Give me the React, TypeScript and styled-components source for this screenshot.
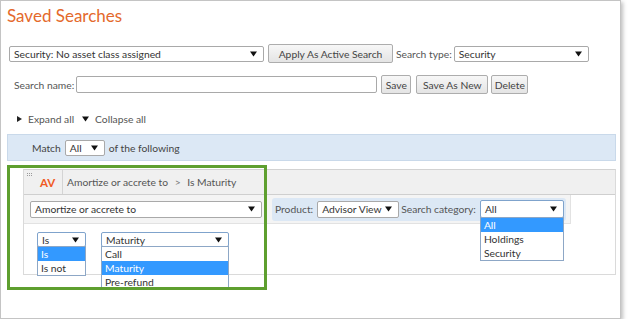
import styled, { createGlobalStyle } from 'styled-components';

const GlobalStyle = createGlobalStyle`
  html, body {
    margin: 0;
    padding: 0;
    background: #fff;
  }
  body {
    font-family: Lato, 'Open Sans', sans-serif;
    font-size: 10.3px;
    color: #444;
  }
`;

const Arrow = () => (
  <svg width='7' height='6' viewBox='0 0 7 6'>
    <path d='M0 0.5 L7 0.5 L3.5 5.5 Z' fill='#111' />
  </svg>
);

const Grip = () => (
  <svg width='6' height='5' viewBox='0 0 6 5'>
    {[0, 2, 4].map((x) =>
      [0, 2].map((y) => <rect key={`${x}-${y}`} x={x} y={y} width='1' height='1' fill='#999' />)
    )}
  </svg>
);

const Select = ({
  value,
  width,
  height = 16,
  focused,
  options,
  active,
}: {
  value: string;
  width: number;
  height?: number;
  focused?: boolean;
  options?: string[];
  active?: string;
}) => (
  <SelectBox $w={width} $h={height} $focused={focused}>
    <span>{value}</span>
    <Arrow />
    {options && (
      <DropList>
        {options.map((o) => (
          <DropItem key={o} $active={o === active}>
            {o}
          </DropItem>
        ))}
      </DropList>
    )}
  </SelectBox>
);

const App = () => {
  return (
    <>
      <GlobalStyle />
      <Window>
        <Title>Saved Searches</Title>
        <Row $top={16}>
          <Select value='Security: No asset class assigned' width={255} />
          <Button $w={125} $ml={4}>
            Apply As Active Search
          </Button>
          <Label $ml={3}>Search type:</Label>
          <Select value='Security' width={135} />
        </Row>
        <Row $top={12}>
          <Label $ml={5}>Search name:</Label>
          <TextInput />
          <Button $w={30} $ml={4}>
            Save
          </Button>
          <Button $w={72} $ml={5}>
            Save As New
          </Button>
          <Button $w={37} $ml={3}>
            Delete
          </Button>
        </Row>
        <ExpandRow>
          <RightTri />
          <LinkText>Expand all</LinkText>
          <Arrow />
          <LinkText>Collapse all</LinkText>
        </ExpandRow>
        <MatchBar>
          <span>Match</span>
          <Select value='All' width={40} />
          <span>of the following</span>
        </MatchBar>
        <Panel>
          <PanelHeader>
            <CodeCell>
              <Grip />
              <Code>AV</Code>
            </CodeCell>
            <Crumb>
              Amortize or accrete to <Sep>&gt;</Sep> Is Maturity
            </Crumb>
          </PanelHeader>
          <Toolbar>
            <Select value='Amortize or accrete to' width={232} height={17} />
            <FilterGroup>
              <Label>Product:</Label>
              <Select value='Advisor View' width={82} height={17} />
              <Label>Search category:</Label>
              <Select
                value='All'
                width={84}
                height={18}
                focused
                options={['All', 'Holdings', 'Security']}
                active='All'
              />
            </FilterGroup>
          </Toolbar>
          <Condition>
            <Select value='Is' width={49} height={15} focused options={['Is', 'Is not']} active='Is' />
            <Select
              value='Maturity'
              width={128}
              height={15}
              focused
              options={['Call', 'Maturity', 'Pre-refund']}
              active='Maturity'
            />
          </Condition>
        </Panel>
        <Highlight />
      </Window>
    </>
  );
};

const Window = styled.div`
  position: relative;
  width: 621px;
  height: 319px;
  box-sizing: border-box;
  border: 1px solid #c4c4c4;
  box-shadow: 2px 2px 4px rgba(0, 0, 0, 0.25);
  padding: 3px 4px 0 6px;
  overflow: hidden;
`;

const Title = styled.div`
  font-size: 17px;
  line-height: 24px;
  color: #e4692c;
`;

const Row = styled.div<{ $top: number }>`
  display: flex;
  align-items: center;
  height: 19px;
  margin-top: ${(p) => p.$top}px;
  padding-left: 2px;
`;

const Label = styled.span<{ $ml?: number }>`
  color: #555;
  margin-left: ${(p) => p.$ml || 0}px;
  margin-right: 2px;
  white-space: nowrap;
`;

const SelectBox = styled.div<{ $w: number; $h: number; $focused?: boolean }>`
  position: relative;
  box-sizing: border-box;
  width: ${(p) => p.$w}px;
  height: ${(p) => p.$h}px;
  flex-shrink: 0;
  display: flex;
  align-items: center;
  justify-content: space-between;
  padding: 0 6px 0 4px;
  background: #fff;
  border: 1px solid ${(p) => (p.$focused ? '#7fa3cc' : '#a9a9a9')};
  border-radius: 2px;
  color: #333;
  white-space: nowrap;
`;

const DropList = styled.div`
  position: absolute;
  top: 100%;
  left: -1px;
  right: -1px;
  background: #fff;
  border: 1px solid #8da7c6;
  z-index: 2;
`;

const DropItem = styled.div<{ $active?: boolean }>`
  height: 14px;
  line-height: 14px;
  padding-left: 3px;
  background: ${(p) => (p.$active ? '#3399ff' : '#fff')};
  color: ${(p) => (p.$active ? '#fff' : '#333')};
`;

const Button = styled.div<{ $w: number; $ml: number }>`
  box-sizing: border-box;
  width: ${(p) => p.$w}px;
  height: 19px;
  margin-left: ${(p) => p.$ml}px;
  display: flex;
  align-items: center;
  justify-content: center;
  border: 1px solid #adadad;
  border-radius: 2px;
  background: linear-gradient(#f7f7f7, #e4e4e4);
  color: #444;
  white-space: nowrap;
  flex-shrink: 0;
`;

const TextInput = styled.div`
  box-sizing: border-box;
  width: 301px;
  height: 17px;
  border: 1px solid #a9a9a9;
  border-radius: 2px;
  background: #fff;
`;

const ExpandRow = styled.div`
  display: flex;
  align-items: center;
  gap: 6px;
  height: 14px;
  margin-top: 18px;
  padding-left: 10px;
`;

const RightTri = styled.span`
  width: 0;
  height: 0;
  border-top: 3.5px solid transparent;
  border-bottom: 3.5px solid transparent;
  border-left: 5px solid #222;
`;

const LinkText = styled.span`
  color: #555;
  margin-right: 2px;
`;

const MatchBar = styled.div`
  box-sizing: border-box;
  height: 27px;
  margin-top: 8px;
  display: flex;
  align-items: center;
  gap: 4px;
  padding-left: 24px;
  background: #dce8f5;
  border: 1px solid #c9d9ea;
  color: #444;
`;

const Panel = styled.div`
  box-sizing: border-box;
  margin: 8px 0 0 16px;
  height: 106px;
  border: 1px solid #dadada;
  border-top-color: #d2d2d2;
`;

const PanelHeader = styled.div`
  display: flex;
  height: 24px;
  background: #f0f0f0;
  border-bottom: 1px solid #cfcfcf;
`;

const CodeCell = styled.div`
  box-sizing: border-box;
  width: 39px;
  display: flex;
  padding: 3px 0 0 3px;
  gap: 7px;
  border-right: 1px solid #d4d4d4;
`;

const Code = styled.span`
  font-weight: 700;
  font-size: 11.5px;
  color: #f05a24;
  line-height: 20px;
`;

const Crumb = styled.div`
  display: flex;
  align-items: center;
  padding-left: 4px;
  color: #555;
  white-space: pre;
`;

const Sep = styled.span`
  margin: 0 4px;
  color: #777;
`;

const Toolbar = styled.div`
  box-sizing: border-box;
  width: 547px;
  height: 29px;
  display: flex;
  align-items: center;
  padding-left: 6px;
  background: #f4f4f4;
  border-right: 1px solid #e2e2e2;
  border-bottom: 1px solid #e2e2e2;
`;

const FilterGroup = styled.div`
  display: flex;
  align-items: center;
  gap: 2px;
  margin-left: 10px;
  height: 23px;
  padding: 0 2px 0 3px;
  background: #dce8f5;
  border-radius: 3px;
`;

const Condition = styled.div`
  display: flex;
  gap: 15px;
  padding: 8px 0 0 13px;
`;

const Highlight = styled.div`
  position: absolute;
  left: 6px;
  top: 164px;
  width: 260px;
  height: 125px;
  box-sizing: border-box;
  border: 3px solid #5e9f2f;
  z-index: 3;
  pointer-events: none;
`;

export default App;
